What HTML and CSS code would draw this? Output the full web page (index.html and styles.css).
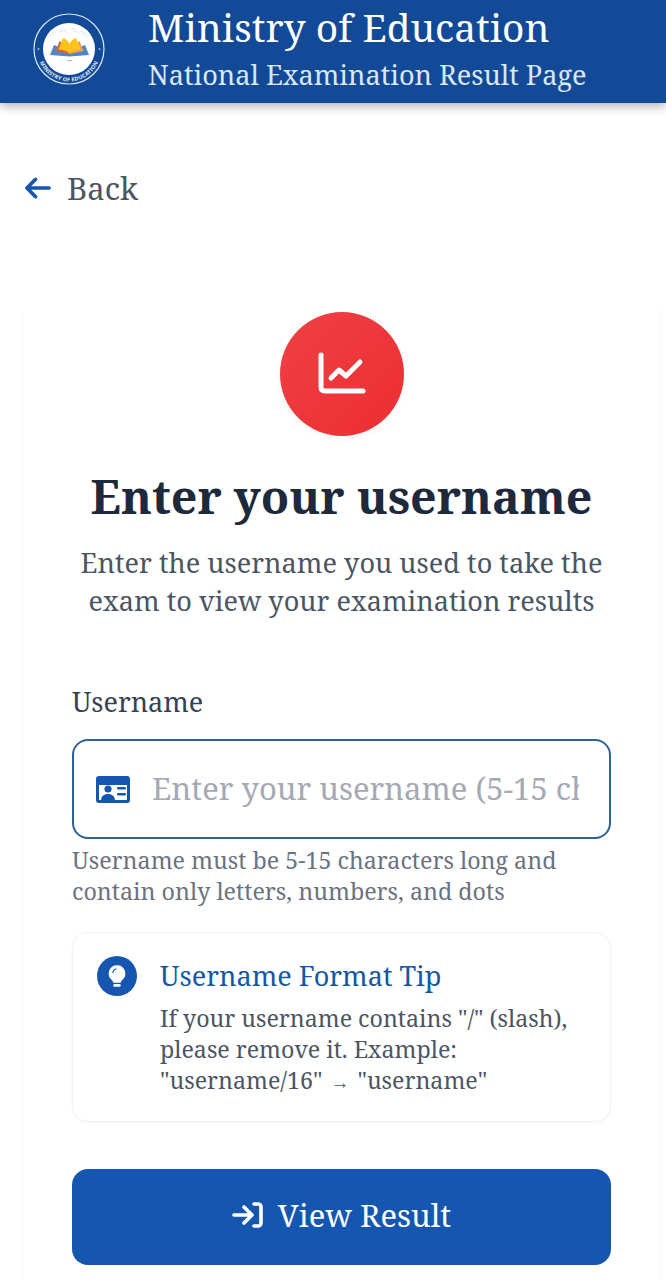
FILE: index.html
```html
<!DOCTYPE html>
<html lang="en">
<head>
<meta charset="utf-8">
<title>National Examination Result Page</title>
<link rel="stylesheet" href="styles.css">
</head>
<body>
<header class="topbar">
  <svg class="logo" viewBox="0 0 72 72" aria-hidden="true">
    <defs>
      <path id="ring-top" d="M7.500 42A29 29 0 0 1 64.500 42"/>
      <path id="ring-bot" d="M4.500 37A31.500 31.500 0 0 0 67.500 37"/>
    </defs>
    <circle cx="36" cy="36" r="35" fill="#134a97" stroke="#dfe8f4" stroke-width="1.200"/>
    <circle cx="36" cy="36" r="26" fill="#fff"/>
    <text class="ring-text"><textPath href="#ring-top" startOffset="50%" text-anchor="middle">ትምህርት ሚኒስቴር</textPath></text>
    <text class="ring-text"><textPath href="#ring-bot" startOffset="50%" text-anchor="middle">MINISTRY OF EDUCATION</textPath></text>
    <circle cx="5.500" cy="36" r="1" fill="#9db9dc"/>
    <circle cx="66.500" cy="36" r="1" fill="#9db9dc"/>
    <path d="M17 42l4-10 15.500 6 15.500-6 4 10-19.500 1.500z" fill="#4f86c4"/>
    <path d="M23 38l3.500-10 10 8v5z" fill="#d9603a"/>
    <path d="M36.500 36l10-8 4 10-14 3z" fill="#eda24a"/>
    <path d="M25.500 36.500l4.500-11.500c3 1 5.500 3 6.500 6 1-3 3.500-5 6.500-6l4.500 11.500c-4 0-8.500 1-11 4-2.500-3-7-4-11-4z" fill="#fcc419"/>
    <rect x="34" y="47" width="5" height="1.200" rx=".6" fill="#b9bdc4"/>
  </svg>
  <div class="brand">
    <h1 class="brand-title">Ministry of Education</h1>
    <p class="brand-sub">National Examination Result Page</p>
  </div>
</header>

<main class="page">
  <a class="back" href="#">
    <svg class="back-icon" viewBox="0 0 28 24" aria-hidden="true"><path d="M26 12H3M12 3l-9 9 9 9"/></svg>
    <span>Back</span>
  </a>

  <section class="card">
    <div class="badge">
      <svg class="badge-icon" viewBox="0 0 48 44" aria-hidden="true">
        <path d="M3 3v32c0 3 1 4 4 4h38"/>
        <path d="M13 26l8-8 7 6 14-14"/>
      </svg>
    </div>
    <h2 class="title">Enter your username</h2>
    <p class="lead">Enter the username you used to take the exam to view your examination results</p>

    <label class="label" for="u">Username</label>
    <div class="field">
      <svg class="id-icon" viewBox="0 0 34 27" aria-hidden="true">
        <path fill-rule="evenodd" d="M3 0h28a3 3 0 0 1 3 3v21a3 3 0 0 1-3 3H3a3 3 0 0 1-3-3V3a3 3 0 0 1 3-3zM3 7v17h28V7z"/>
        <rect x="1" y="2" width="32" height="7"/>
        <circle cx="12" cy="13" r="3.600"/>
        <path d="M5 25c0-5 3-7 7-7s7 2 7 7z"/>
        <rect x="21" y="11" width="9" height="2.600" rx="1"/>
        <rect x="21" y="17" width="9" height="2.600" rx="1"/>
      </svg>
      <input class="input" id="u" type="text" placeholder="Enter your username (5-15 characters)">
    </div>
    <p class="hint">Username must be 5-15 characters long and contain only letters, numbers, and dots</p>

    <aside class="tip">
      <span class="tip-badge">
        <svg viewBox="0 0 24 28" class="tip-icon" aria-hidden="true">
          <path fill="#fff" d="M12 1a10 10 0 0 0-6 18c1 1 1.500 2 1.500 3h9c0-1 .5-2 1.500-3a10 10 0 0 0-6-18z"/>
          <rect x="7.500" y="23.500" width="9" height="3.500" rx="1.700" fill="#fff"/>
          <path d="M7 10a5 5 0 0 1 4-4.500" fill="none" stroke="#1557b0" stroke-width="1.300" stroke-linecap="round"/>
        </svg>
      </span>
      <div class="tip-body">
        <h3 class="tip-title">Username Format Tip</h3>
        <p class="tip-text">If your username contains "/" (slash), please remove it. Example: "username/16" <span class="arrow">→</span> "username"</p>
      </div>
    </aside>

    <button class="submit" type="button">
      <svg class="submit-icon" viewBox="0 0 31 26" aria-hidden="true"><path d="M2 13h17M12 5l8 8-8 8M22 2h4a3 3 0 0 1 3 3v16a3 3 0 0 1-3 3h-4"/></svg>
      <span>View Result</span>
    </button>
  </section>
</main>
</body>
</html>
```
FILE: styles.css
```css
* { box-sizing: border-box; }
html, body { margin: 0; padding: 0; }
body {
  height: 1280px;
  overflow: hidden;
  background: #fff;
  font-family: "Noto Serif", "DejaVu Serif", serif;
  color: #1e293b;
}
.topbar {
  height: 103px;
  background: #134a97;
  box-shadow: 0 3px 10px rgba(0, 0, 0, .32);
  display: flex;
  align-items: flex-start;
  padding: 13px 0 0 33px;
  gap: 43px;
}
.logo { width: 72px; height: 72px; flex: none; }
.ring-text { font: 700 5.400px "Noto Sans", "Noto Sans CJK SC", sans-serif; fill: #e6eef8; letter-spacing: .25px; }
.brand { margin-top: -14px; }
.brand-title { margin: 0; font-size: 38.800px; line-height: 57px; font-weight: 400; color: #fff; }
.brand-sub { margin: 0; font-size: 27.100px; line-height: 37px; color: #dbe7f5; }

.page { padding: 0 4px 0 23px; }
.back {
  display: flex;
  align-items: center;
  gap: 16px;
  margin: 63px 0 0 1px;
  height: 44px;
  font-size: 31px;
  color: #4b5563;
  text-decoration: none;
}
.back-icon { width: 27px; height: 24px; fill: none; stroke: #1557b0; stroke-width: 3.800; stroke-linecap: round; stroke-linejoin: round; }

.card {
  margin-top: 90px;
  width: 637px;
  height: 980px;
  padding: 12px 49px 0;
  background: #fff;
  border-radius: 14px 14px 0 0;
  box-shadow: 0 3px 6px -1px rgba(30, 50, 90, .06);
  display: flex;
  flex-direction: column;
  align-items: stretch;
}
.badge {
  width: 124px;
  height: 124px;
  border-radius: 50%;
  align-self: center;
  background: linear-gradient(135deg, #f04044, #ec2e31);
  box-shadow: 0 3px 8px rgba(0, 0, 0, .03);
  display: flex;
  align-items: center;
  justify-content: center;
}
.badge-icon { width: 48px; height: 44px; fill: none; stroke: #fff; stroke-width: 5; stroke-linecap: round; stroke-linejoin: round; }
.title { margin: 26px -20px 0; font-size: 46.500px; line-height: 68px; font-weight: 700; text-align: center; color: #1e293b; white-space: nowrap; }
.lead { margin: 14px -4px 0; font-size: 27.150px; line-height: 38px; text-align: center; color: #4b5563; }
.label { display: block; margin-top: 63px; font-size: 27px; line-height: 38px; color: #374151; }
.field {
  margin-top: 18px;
  height: 100px;
  border: 2px solid #2f6098;
  border-radius: 16px;
  display: flex;
  align-items: center;
  padding: 0 30px 0 22px;
  gap: 22px;
}
.id-icon { width: 34px; height: 27px; flex: none; fill: #1557b0; }
.input {
  flex: 1;
  min-width: 0;
  border: 0;
  outline: 0;
  padding: 0 0 2px;
  background: none;
  font: 400 31px "Noto Serif", "DejaVu Serif", serif;
  color: #1e293b;
}
.input::placeholder { color: #a5a9b3; opacity: 1; }
.hint { margin: 6px 0 0; font-size: 23.250px; line-height: 31px; color: #6b7280; }
.tip {
  margin-top: 25px;
  height: 190px;
  border: 1px solid #f1f2f5;
  border-radius: 16px;
  box-shadow: 0 1px 3px rgba(30, 50, 90, .04);
  padding: 23px 24px;
  display: flex;
  gap: 23px;
}
.tip-badge {
  width: 40px;
  height: 40px;
  border-radius: 50%;
  background: #1557b0;
  flex: none;
  display: flex;
  align-items: center;
  justify-content: center;
}
.tip-icon { width: 20px; height: 24px; }
.tip-title { margin: 0; font-size: 27.100px; line-height: 40px; font-weight: 400; color: #1557a5; }
.tip-text { margin: 7px 0 0; font-size: 23.200px; line-height: 31px; color: #4b5563; }
.arrow { font-family: "Liberation Serif", serif; font-size: 19px; line-height: 1; margin: 0 2px; }
.submit {
  margin-top: 47px;
  height: 96px;
  border: 0;
  border-radius: 16px;
  background: #1557b0;
  color: #fff;
  padding: 0 0 4px;
  font: 400 31px "Noto Serif", "DejaVu Serif", serif;
  display: flex;
  align-items: center;
  justify-content: center;
  gap: 15px;
}
.submit-icon { width: 31px; height: 26px; fill: none; stroke: #fff; stroke-width: 3.600; stroke-linecap: round; stroke-linejoin: round; }
```
